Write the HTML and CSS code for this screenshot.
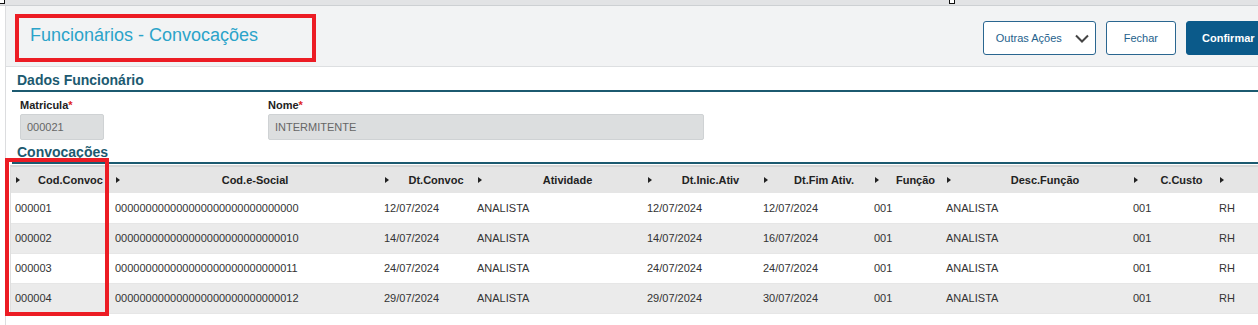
FILE: index.html
```html
<!DOCTYPE html>
<html>
<head>
<link rel="stylesheet" href="styles.css">
</head>
<body>

<div class="topbar"></div>
<span class="handle handle-left"></span>
<span class="handle handle-mid"></span>

<div class="page">
  <div class="header">
    <h1 class="title">Funcionários - Convocações</h1>
    <div class="actions">
      <button type="button" class="btn btn-more">Outras Ações
        <svg width="14" height="9" viewBox="0 0 14 9"><path d="M1 1.5 L7 7.5 L13 1.5" fill="none" stroke="#444" stroke-width="2"/></svg>
      </button>
      <button type="button" class="btn">Fechar</button>
      <button type="button" class="btn btn-primary">Confirmar</button>
    </div>
  </div>

  <div class="section">
    <h2 class="section-title">Dados Funcionário</h2>
  </div>
  <div class="fields">
    <div class="field field-mat">
      <label>Matricula<span class="req">*</span></label>
      <div class="input">000021</div>
    </div>
    <div class="field field-nome">
      <label>Nome<span class="req">*</span></label>
      <div class="input">INTERMITENTE</div>
    </div>
  </div>

  <div class="section">
    <h2 class="section-title section-title-grid">Convocações</h2>
  </div>

  <div class="grid-wrap">
    <table class="grid">
      <colgroup>
        <col style="width:100px"><col style="width:269px"><col style="width:93px"><col style="width:170px"><col style="width:116px">
        <col style="width:111px"><col style="width:72px"><col style="width:187px"><col style="width:86px"><col style="width:60px">
      </colgroup>
      <thead>
        <tr id="gridHead"></tr>
      </thead>
      <tbody id="gridBody"></tbody>
    </table>
  </div>
</div>

<div class="mark mark-title"></div>
<div class="mark mark-col"></div>

<script>
const columns = ['Cod.Convoc', 'Cod.e-Social', 'Dt.Convoc', 'Atividade', 'Dt.Inic.Ativ', 'Dt.Fim Ativ.', 'Função', 'Desc.Função', 'C.Custo', ''];

const rows = [
  ['000001', '000000000000000000000000000000', '12/07/2024', 'ANALISTA', '12/07/2024', '12/07/2024', '001', 'ANALISTA', '001', 'RH'],
  ['000002', '000000000000000000000000000010', '14/07/2024', 'ANALISTA', '14/07/2024', '16/07/2024', '001', 'ANALISTA', '001', 'RH'],
  ['000003', '000000000000000000000000000011', '24/07/2024', 'ANALISTA', '24/07/2024', '24/07/2024', '001', 'ANALISTA', '001', 'RH'],
  ['000004', '000000000000000000000000000012', '29/07/2024', 'ANALISTA', '29/07/2024', '30/07/2024', '001', 'ANALISTA', '001', 'RH']
];

const head = document.getElementById('gridHead');
columns.forEach(function(name) {
  const th = document.createElement('th');
  th.innerHTML = '<div class="th-inner"><span class="arrow"></span><span class="th-text">' + name + '</span></div>';
  head.appendChild(th);
});

const body = document.getElementById('gridBody');
rows.forEach(function(row) {
  const tr = document.createElement('tr');
  row.forEach(function(value) {
    const td = document.createElement('td');
    td.textContent = value;
    tr.appendChild(td);
  });
  body.appendChild(tr);
});
</script>

</body>
</html>
```

FILE: styles.css
```css
body {
  margin: 0;
  font-family: "Liberation Sans", Arial, sans-serif;
  background-color: #fff;
  color: #222;
  width: 1258px;
  height: 325px;
  overflow: hidden;
  position: relative;
}

.topbar {
  height: 5px;
  background-color: #e2e3e5;
  border-bottom: 1px solid #cdd0d3;
}

.handle {
  position: absolute;
  top: -2px;
  width: 4px;
  height: 4px;
  border: 1px solid #111;
  background-color: #fff;
}

.handle-left {
  left: -1px;
}

.handle-mid {
  left: 949px;
}

.page {
  margin-left: 5px;
  border-left: 1px solid #dcdddf;
  height: 319px;
  overflow: hidden;
}

.header {
  height: 60px;
  background-color: #f2f3f4;
  border-bottom: 1px solid #dddfe1;
  display: flex;
  align-items: center;
  justify-content: space-between;
  padding-left: 24px;
}

.title {
  margin: -2px 0 0 0;
  font-size: 18px;
  font-weight: normal;
  color: #2ba3c9;
}

.actions {
  display: flex;
  gap: 10px;
  margin-top: 4px;
  margin-right: -8px;
}

.btn {
  height: 34px;
  padding: 0 17px;
  border: 1px solid #2a6690;
  border-radius: 3px;
  background-color: #fff;
  color: #24618c;
  font-family: "Liberation Sans", Arial, sans-serif;
  font-size: 11px;
  cursor: pointer;
}

.btn-more {
  width: 113px;
  padding: 0 6px 0 12px;
  display: flex;
  align-items: center;
  justify-content: space-between;
}

.btn-primary {
  background-color: #0b5a8a;
  border-color: #0b5a8a;
  color: #fff;
  font-weight: bold;
  width: 80px;
  padding: 0 0 0 15px;
  text-align: left;
}

.section {
  margin-left: 6px;
  border-bottom: 2px solid #1c5a70;
}

.section-title {
  margin: 0;
  padding: 5px 0 1px 5px;
  font-size: 14px;
  font-weight: bold;
  color: #1c5a70;
  line-height: 17px;
}

.section-title-grid {
  padding-top: 4px;
}

.fields {
  display: flex;
  padding: 7px 0 0 14px;
  height: 48px;
  box-sizing: border-box;
}

.field label {
  display: block;
  font-size: 11px;
  font-weight: bold;
  color: #222;
  line-height: 13px;
}

.req {
  color: #e02424;
}

.input {
  margin-top: 2px;
  height: 26px;
  box-sizing: border-box;
  border: 1px solid #cfd2d4;
  border-radius: 2px;
  background-color: #dcdedf;
  color: #666;
  font-size: 11px;
  line-height: 24px;
  padding-left: 6px;
}

.field-mat {
  width: 248px;
}

.field-mat .input {
  width: 84px;
}

.field-nome .input {
  width: 436px;
}

.grid-wrap {
  margin-top: 1px;
  margin-left: 4px;
  border-left: 1px solid #dedede;
  border-top: 2px solid #d6d6d6;
}

.grid {
  border-collapse: collapse;
  table-layout: fixed;
  width: 1264px;
  font-size: 11px;
}

.grid th {
  height: 26px;
  padding: 0 0 0 5px;
  background-color: #e5e5e5;
  font-weight: bold;
  color: #222;
}

.th-inner {
  display: flex;
  align-items: center;
}

.arrow {
  width: 0;
  height: 0;
  border-left: 4px solid #222;
  border-top: 3px solid transparent;
  border-bottom: 3px solid transparent;
}

.th-text {
  flex: 1;
  text-align: center;
  white-space: nowrap;
  padding-left: 10px;
}

.grid td {
  height: 30px;
  padding: 0 0 0 4px;
  color: #333;
  white-space: nowrap;
  border-bottom: 1px solid #e6e6e6;
  box-sizing: border-box;
}

.grid tbody tr:nth-child(even) {
  background-color: #ebebeb;
}

.mark {
  position: absolute;
  border: 4px solid #ec1c24;
  box-sizing: border-box;
}

.mark-title {
  left: 15px;
  top: 14px;
  width: 301px;
  height: 48px;
}

.mark-col {
  left: 5px;
  top: 158px;
  width: 104px;
  height: 158px;
}
```
